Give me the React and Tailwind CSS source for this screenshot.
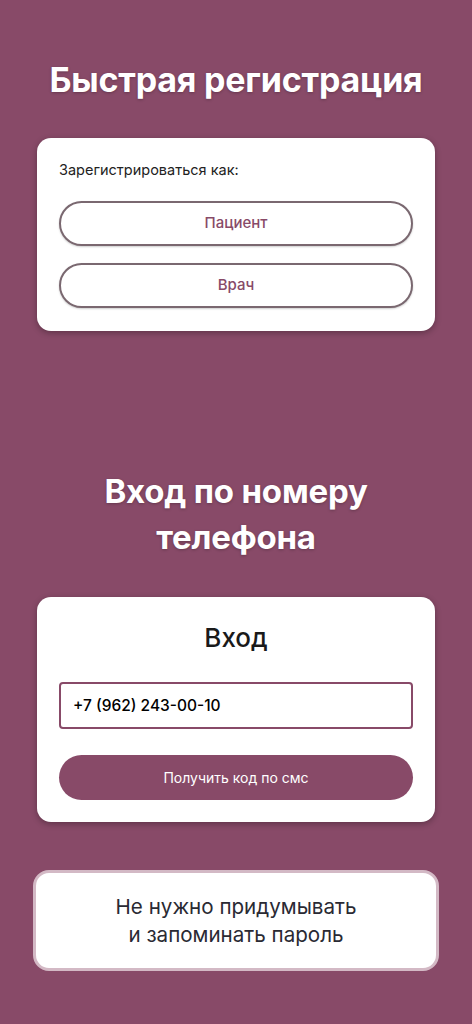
export default function App() {
  const font = { fontFamily: 'Inter, "Noto Sans", sans-serif' };
  return (
    <div className="min-h-[1024px] w-full bg-[#884a68] flex flex-col items-center" style={font}>
      <h1 className="mt-[58px] text-[34px] leading-[44px] font-bold text-white text-center tracking-[-0.2px] [text-shadow:0_1px_3px_rgba(0,0,0,0.25)]">
        Быстрая регистрация
      </h1>
      <div className="mt-[36px] w-[398px] bg-white rounded-[14px] shadow-[0_2px_6px_rgba(0,0,0,0.3)] px-[22px] pt-[22px] pb-[23px]">
        <div className="text-[14.5px] leading-[20px] text-[#222]">Зарегистрироваться как:</div>
        <button className="mt-[21px] w-full h-[45px] rounded-full border-2 border-[#7a6870] text-[15px] font-medium text-[#884a68] bg-white shadow-[0_1px_2px_rgba(0,0,0,0.2)]">
          Пациент
        </button>
        <button className="mt-[17px] w-full h-[45px] rounded-full border-2 border-[#7a6870] text-[15px] font-medium text-[#884a68] bg-white shadow-[0_1px_2px_rgba(0,0,0,0.2)]">
          Врач
        </button>
      </div>
      <h2 className="mt-[137px] text-[33px] leading-[46px] font-bold text-white text-center tracking-[-0.2px] [text-shadow:0_1px_3px_rgba(0,0,0,0.25)]">
        Вход по номеру<br />телефона
      </h2>
      <div className="mt-[37px] w-[398px] bg-white rounded-[14px] shadow-[0_2px_6px_rgba(0,0,0,0.3)] px-[22px] pt-[24px] pb-[22px]">
        <div className="text-center text-[26px] leading-[34px] font-medium text-[#1a1a1a]">Вход</div>
        <div className="mt-[27px] h-[47px] rounded-[4px] border-2 border-[#884a68] flex items-center px-[12px] text-[15.5px] font-medium text-black">
          +7 (962) 243-00-10
        </div>
        <button className="mt-[26px] w-full h-[45px] rounded-full bg-[#884a68] text-white text-[14px] font-normal">
          Получить код по смс
        </button>
      </div>
      <div className="mt-[48px] w-[406px] h-[101px] bg-white rounded-[16px] border-[3px] border-[#d3b9c5] flex items-center justify-center text-center text-[20.6px] leading-[28px] text-[#2a2a33]">
        Не нужно придумывать<br />и запоминать пароль
      </div>
    </div>
  );
}
